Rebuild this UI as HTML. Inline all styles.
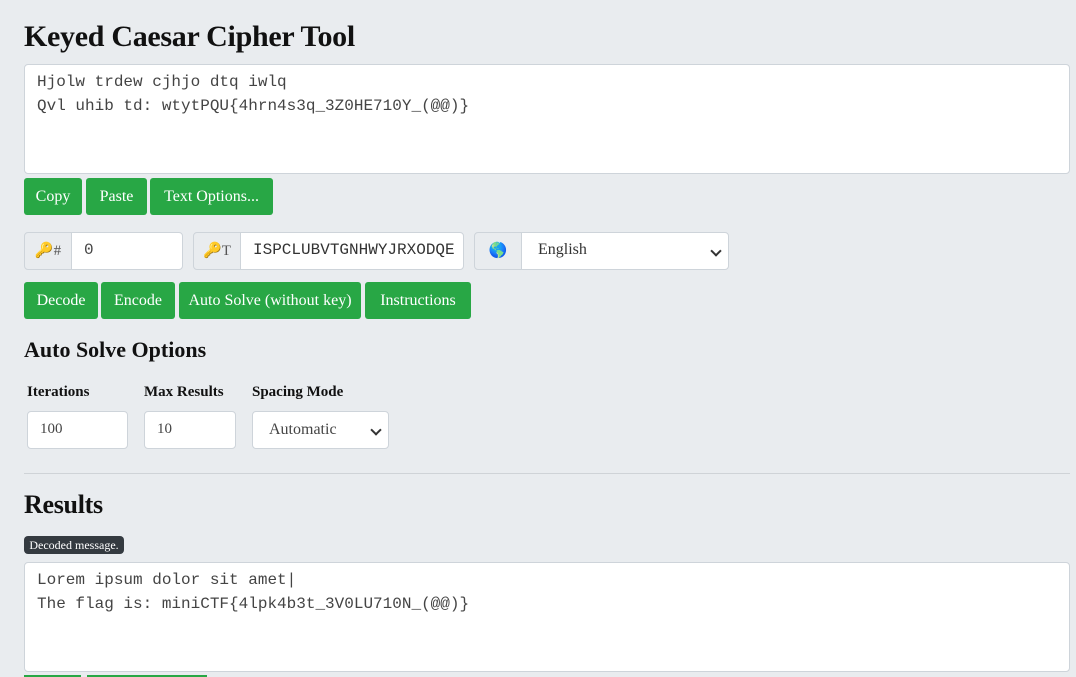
<!DOCTYPE html>
<html><head><style>
html,body{margin:0;height:677px;overflow:hidden}
body{background:#e9ecef;font-family:"Liberation Serif",serif;color:#111;width:1076px;position:relative}
.a{position:absolute}
h1{position:absolute;margin:0;font-size:30px;font-weight:bold;left:24px;letter-spacing:-0.3px}
.ta{position:absolute;left:24px;width:1046px;height:110px;background:#fff;border:1px solid #ced4da;border-radius:4px;box-sizing:border-box;font-family:"Liberation Mono",monospace;font-size:16px;color:#444;padding:5px 12px;line-height:24px;white-space:pre}
.btn{position:absolute;background:#28a745;color:#fff;border-radius:3px;font-size:16px;height:37px;line-height:37px;text-align:center}
.box{position:absolute;background:#fff;border:1px solid #ced4da;border-radius:4px;box-sizing:border-box;height:38px}
.pre{position:absolute;background:#e9ecef;border:1px solid #ced4da;border-radius:4px 0 0 4px;box-sizing:border-box;height:38px;text-align:center;line-height:36px;font-size:15px;color:#555}
.lbl{position:absolute;font-weight:bold;font-size:15px;top:384px}
.chev{position:absolute;right:8px;top:14px;width:6px;height:6px;border-right:2px solid #333;border-bottom:2px solid #333;transform:rotate(45deg)}
</style></head><body>
<h1 style="top:20px">Keyed Caesar Cipher Tool</h1>
<div class="ta" style="top:64px">Hjolw trdew cjhjo dtq iwlq
Qvl uhib td: wtytPQU{4hrn4s3q_3Z0HE710Y_(@@)}</div>
<div class="btn" style="left:24px;top:178px;width:58px">Copy</div>
<div class="btn" style="left:86px;top:178px;width:61px">Paste</div>
<div class="btn" style="left:150px;top:178px;width:123px">Text Options...</div>

<div class="pre" style="left:24px;top:232px;width:48px">🔑#</div>
<div class="box" style="left:71px;top:232px;width:112px;border-radius:0 4px 4px 0;font-family:'Liberation Mono',monospace;font-size:16px;color:#444;padding:8px 12px">0</div>
<div class="pre" style="left:193px;top:232px;width:48px">🔑T</div>
<div class="box" style="left:240px;top:232px;width:224px;border-radius:0 4px 4px 0;font-family:'Liberation Mono',monospace;font-size:16px;color:#333;padding:8px 12px;overflow:hidden;white-space:nowrap">ISPCLUBVTGNHWYJRXODQE</div>
<div class="pre" style="left:474px;top:232px;width:48px">🌎</div>
<div class="box" style="left:521px;top:232px;width:208px;border-radius:0 4px 4px 0;font-size:16px;color:#333;padding:8px 16px">English<span class="chev"></span></div>

<div class="btn" style="left:24px;top:282px;width:74px">Decode</div>
<div class="btn" style="left:101px;top:282px;width:74px">Encode</div>
<div class="btn" style="left:179px;top:282px;width:182px">Auto Solve (without key)</div>
<div class="btn" style="left:365px;top:282px;width:106px">Instructions</div>

<div class="a" style="left:24px;top:337px;font-size:22px;font-weight:bold">Auto Solve Options</div>
<div class="lbl" style="left:27px">Iterations</div>
<div class="lbl" style="left:144px">Max Results</div>
<div class="lbl" style="left:252px">Spacing Mode</div>
<div class="box" style="left:27px;top:411px;width:101px;padding:9px 12px;font-size:15px;color:#444">100</div>
<div class="box" style="left:144px;top:411px;width:92px;padding:9px 12px;font-size:15px;color:#444">10</div>
<div class="box" style="left:252px;top:411px;width:137px;padding:9px 16px;font-size:16px;color:#444">Automatic<span class="chev"></span></div>
<div class="a" style="left:24px;top:473px;width:1046px;height:1px;background:#cfd3d7"></div>
<h1 style="top:490px;font-size:26px">Results</h1>
<div class="a" style="left:24px;top:536px;width:100px;height:18px;background:#343a40;color:#fff;border-radius:4px;font-size:12px;line-height:18px;text-align:center">Decoded message.</div>
<div class="ta" style="top:562px;height:110px">Lorem ipsum dolor sit amet|
The flag is: miniCTF{4lpk4b3t_3V0LU710N_(@@)}</div>
<div class="a" style="left:24px;top:675px;width:57px;height:2px;background:#28a745"></div>
<div class="a" style="left:87px;top:675px;width:120px;height:2px;background:#28a745"></div>
</body></html>
